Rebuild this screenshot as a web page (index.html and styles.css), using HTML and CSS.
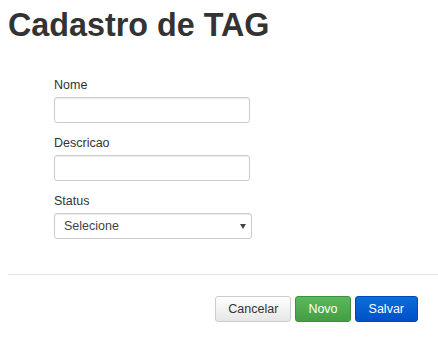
FILE: index.html
```html
<!DOCTYPE html>
<html>
<head>
    <title>Cadastro de TAG</title>
    <link rel="stylesheet" href="styles.css">
</head>
<body>
    <h1 class="title">Cadastro de TAG</h1>

    <form class="form">
        <div class="group">
            <label for="nome">Nome</label>
            <input type="text" id="nome" class="control">
        </div>
        <div class="group">
            <label for="descricao">Descricao</label>
            <input type="text" id="descricao" class="control">
        </div>
        <div class="group">
            <label for="status">Status</label>
            <span class="select-wrap">
                <select id="status" class="control select">
                    <option>Selecione</option>
                </select>
            </span>
        </div>
    </form>

    <hr class="divider">

    <div class="actions">
        <button class="btn btn-default">Cancelar</button>
        <button class="btn btn-success">Novo</button>
        <button class="btn btn-primary">Salvar</button>
    </div>
</body>
</html>
```

FILE: styles.css
```css
body {
    margin: 0;
    padding: 0 0 0 8px;
    font-family: "Liberation Sans", Arial, sans-serif;
    color: #333;
    background: #fff;
}

.title {
    margin: 0;
    padding-top: 5px;
    font-size: 32.3px;
    line-height: 40px;
    font-weight: bold;
    color: #333;
}

.form {
    margin: 33px 0 0 46px;
    width: 198px;
}

.group {
    margin-bottom: 13px;
}
.group:last-child {
    margin-bottom: 0;
}

.group label {
    display: block;
    font-size: 12.5px;
    line-height: 15px;
    margin-bottom: 4px;
    color: #333;
}

.control {
    display: block;
    box-sizing: border-box;
    width: 196px;
    height: 26px;
    margin: 0;
    padding: 0 9px;
    border: 1px solid #ccc;
    border-radius: 3px;
    background: #fff;
    box-shadow: inset 0 1px 1px rgba(0, 0, 0, 0.075);
    font-family: inherit;
    font-size: 12.5px;
    color: #444;
}

.select-wrap {
    display: block;
    position: relative;
    width: 198px;
}
.select {
    width: 198px;
    appearance: none;
    -webkit-appearance: none;
}
.select-wrap::after {
    content: "";
    position: absolute;
    right: 6px;
    top: 11px;
    border-left: 3px solid transparent;
    border-right: 3px solid transparent;
    border-top: 5px solid #444;
}

.divider {
    margin: 35px 0 0 0;
    border: 0;
    border-top: 1px solid #e2e2e2;
}

.actions {
    display: flex;
    justify-content: flex-end;
    gap: 4px;
    padding: 21px 20px 0 0;
}

.btn {
    box-sizing: border-box;
    height: 26px;
    padding: 0 12px;
    border: 1px solid;
    border-radius: 3px;
    font-family: inherit;
    font-size: 12.5px;
    cursor: pointer;
}
.btn-default {
    color: #333;
    border-color: #ccc;
    background: linear-gradient(#fff, #e6e6e6);
}
.btn-success {
    color: #fff;
    border-color: #3e8f3e;
    background: linear-gradient(#5cb85c, #449d44);
}
.btn-primary {
    color: #fff;
    padding: 0 13px;
    border-color: #0047b5;
    background: linear-gradient(#0a6ed8, #0050c8);
}
```
